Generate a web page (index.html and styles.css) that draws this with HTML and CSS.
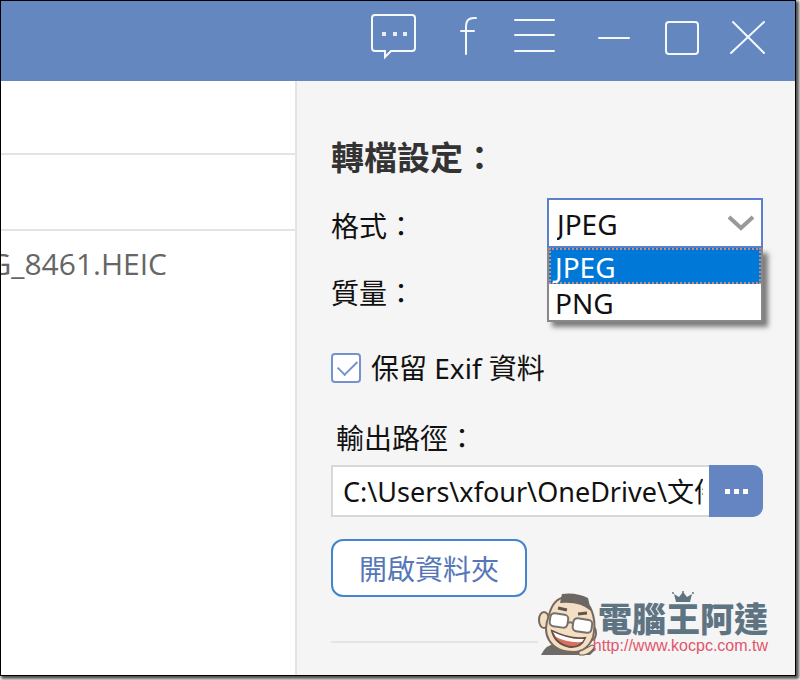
FILE: index.html
```html
<!DOCTYPE html>
<html lang="zh-Hant">
<head>
  <meta charset="UTF-8">
  <meta name="viewport" content="width=device-width, initial-scale=1.0">
  <title>轉檔設定</title>
  <link rel="stylesheet" href="styles.css">
</head>
<body>
  <div class="window">
    <header class="titlebar">
      <div class="tools">
        <button type="button" aria-label="Feedback">
          <svg width="46" height="46" viewBox="0 0 46 46">
            <path d="M4 2H41Q44 2 44 5V35Q44 38 41 38H20L14 44V38H4Q1 38 1 35V5Q1 2 4 2Z"/>
            <path class="solid" d="M11 19h4v4h-4zM22 19h4v4h-4zM32 19h4v4h-4z"/>
          </svg>
        </button>
        <button type="button" aria-label="Facebook">
          <svg width="20" height="46" viewBox="0 0 20 46">
            <path d="M21 5H19Q11 5 11 13V41M6 18H19"/>
          </svg>
        </button>
        <button type="button" aria-label="Menu">
          <svg width="42" height="46" viewBox="0 0 42 46">
            <path d="M2 7H41M2 22H41M2 38H41"/>
          </svg>
        </button>
      </div>
      <div class="controls">
        <button type="button" aria-label="Minimize">
          <svg width="34" height="46" viewBox="0 0 34 46">
            <path d="M2 25H32"/>
          </svg>
        </button>
        <button type="button" aria-label="Maximize">
          <svg width="36" height="46" viewBox="0 0 36 46">
            <rect x="3" y="9" width="32" height="32" rx="3"/>
          </svg>
        </button>
        <button type="button" aria-label="Close">
          <svg width="34" height="46" viewBox="0 0 34 46">
            <path d="M2 9L33 40M33 9L0 40"/>
          </svg>
        </button>
      </div>
    </header>

    <div class="content">
      <main class="files">
        <div class="row"></div>
        <div class="row"></div>
        <div class="file"><span>IMG_8461.HEIC</span></div>
      </main>

      <aside class="settings">
        <h2>轉檔設定：</h2>

        <div class="field format">
          <label for="format">格式：</label>
          <div class="dropdown">
            <select id="format">
              <option>JPEG</option>
              <option>PNG</option>
            </select>
            <svg class="arrow" width="28" height="18" viewBox="0 0 28 18">
              <path d="M2 3L14 14L26 3"/>
            </svg>
            <ul class="options">
              <li class="selected">JPEG</li>
              <li>PNG</li>
            </ul>
          </div>
        </div>

        <div class="field quality">質量：</div>

        <div class="field exif">
          <input type="checkbox" id="exif" checked>
          <label for="exif">保留 Exif 資料</label>
        </div>

        <label class="path-label" for="path">輸出路徑：</label>
        <div class="path">
          <input type="text" id="path" value="C:\Users\xfour\OneDrive\文件">
          <button type="button" aria-label="Browse"><i></i><i></i><i></i></button>
        </div>

        <button type="button" class="open">開啟資料夾</button>

        <hr>
      </aside>

      <div class="watermark">
        <svg class="face" width="60" height="64" viewBox="0 0 60 64">
          <path d="M3 63Q8 52 18 52L44 57Q52 58 55 53L58 57L52 63Z" fill="#6c6b6a"/>
          <path d="M41 59Q48 57 54 53L57 54Q53 61 46 63H41Z" fill="#f4dfc4" stroke="#6a5a4a"/>
          <ellipse cx="6" cy="28" rx="5" ry="8" fill="#f4dfc4" stroke="#77695b" stroke-width="2"/>
          <ellipse cx="54" cy="41" rx="4" ry="7" fill="#f4dfc4" stroke="#77695b" stroke-width="2"/>
          <path d="M11 23Q15 7 27 5Q43 2 52 15Q59 29 55 45Q50 59 36 60Q18 60 11 48Q5 38 11 23Z" fill="#f4dfc4" stroke="#77695b" stroke-width="2"/>
          <path d="M22 11L24 2Q38 0 50 6L53 19Q42 9 22 11Z" fill="#6c6763"/>
          <path d="M20 16L29 18M40 22L49 21" stroke="#5c5550" stroke-width="3"/>
          <rect x="12" y="22" width="18" height="13" rx="4" fill="#fff" stroke="#77716c" stroke-width="2" transform="rotate(8 21 28)"/>
          <rect x="35" y="27" width="19" height="13" rx="4" fill="#fff" stroke="#77716c" stroke-width="2" transform="rotate(8 44 33)"/>
          <path d="M30 31Q33 29 35 32" fill="none" stroke="#77716c" stroke-width="2"/>
          <path d="M14 39Q32 48 47 46Q43 56 32 55Q17 52 14 39Z" fill="#d9705f" stroke="#695044" stroke-width="2"/>
          <path d="M15 40Q32 48 46 47L44 50Q29 51 18 45Z" fill="#fff"/>
        </svg>
        <div class="brand">
          <svg class="crown" width="24" height="12" viewBox="0 0 24 12">
            <path d="M3 3L8 6L12 1L16 6L21 3L19 11H5Z"/>
            <circle cx="2" cy="2" r="1"/>
            <circle cx="12" cy="1" r="1"/>
            <circle cx="22" cy="2" r="1"/>
          </svg>
          <strong>電腦王阿達</strong>
          <a href="http://www.kocpc.com.tw">http://www.kocpc.com.tw</a>
        </div>
      </div>
    </div>
  </div>
</body>
</html>
```

FILE: styles.css
```css
* {
  box-sizing: border-box;
}
body {
  margin: 0;
  padding: 0 4px 4px 0;
  background: #fff;
  color: #111;
  font-family: "Noto Sans", "Noto Sans CJK TC", sans-serif;
  font-size: 28px;
  line-height: 40px;
}
button, input, select {
  font: inherit;
  color: inherit;
  margin: 0;
  padding: 0;
}
.window {
  display: flex;
  flex-direction: column;
  min-height: calc(100vh - 4px);
  border: 1px solid #000;
  box-shadow: 2px 2px 3px 1px rgba(0,0,0,0.7);
}

/* title bar */
.titlebar {
  display: flex;
  justify-content: flex-end;
  gap: 42px;
  height: 80px;
  padding: 12px 30px 0 0;
  background: #6587c0;
}
.tools, .controls {
  display: flex;
  align-items: flex-start;
}
.tools {
  gap: 38px;
}
.controls {
  gap: 32px;
}
.titlebar button {
  display: flex;
  border: none;
  background: none;
}
.titlebar svg {
  overflow: visible;
  fill: none;
  stroke: #f4f9ff;
  stroke-width: 2;
  stroke-linecap: round;
}
.titlebar .solid {
  fill: #e6effb;
  stroke: none;
}

/* file list */
.content {
  position: relative;
  display: flex;
  flex: 1;
}
.files {
  flex: 1;
  min-width: 0;
  background: #fff;
  border-right: 2px solid #e4e4e4;
}
.row {
  height: 76px;
  border-bottom: 2px solid #e4e4e4;
}
.row:first-child {
  height: 74px;
}
.file {
  display: flex;
  justify-content: flex-end;
  padding: 13px 128px 0 0;
  overflow: hidden;
  color: #666;
  font-family: "Open Sans", sans-serif;
  font-size: 30px;
}

/* settings panel */
.settings {
  flex: 0 0 498px;
  min-width: 0;
  padding: 57px 32px 32px 34px;
  background: #f5f5f5;
}
h2 {
  margin: 0 0 20px;
  font-size: 33px;
  font-weight: bold;
  line-height: 40px;
  color: #333;
}
.field {
  display: flex;
  align-items: center;
}
.format {
  justify-content: space-between;
  margin-bottom: 25px;
}
.format label {
  padding-top: 6px;
}
.dropdown {
  position: relative;
  width: 216px;
}
select {
  display: block;
  width: 100%;
  height: 50px;
  padding: 2px 8px 0;
  appearance: none;
  background: #fff;
  border: 2px solid #5b7fcb;
  border-radius: 0;
}
.arrow {
  position: absolute;
  top: 16px;
  right: 8px;
  fill: none;
  stroke: #999;
  stroke-width: 4;
  pointer-events: none;
}
.options {
  position: absolute;
  top: 100%;
  left: 0;
  width: 100%;
  margin: 0;
  padding: 0;
  list-style: none;
  background: #fff;
  border: 2px solid #888;
  border-top: none;
  box-shadow: 5px 5px 5px rgba(0,0,0,0.5);
}
.options li {
  height: 36px;
  padding: 0 6px;
  line-height: 38px;
}
.options .selected {
  padding: 0 4px;
  line-height: 34px;
  background: #0078d7;
  border: 2px dotted #c98a80;
  color: #fff;
}
.quality {
  margin-bottom: 35px;
}
.exif {
  gap: 10px;
  margin-bottom: 30px;
}
.exif input {
  position: relative;
  width: 30px;
  height: 30px;
  appearance: none;
  background: #fff;
  border: 2px solid #7493cc;
  border-radius: 4px;
}
.exif input:checked::before {
  content: "";
  position: absolute;
  top: 5px;
  left: 5px;
  width: 17px;
  height: 9px;
  border: solid #7493cc;
  border-width: 0 0 2px 2px;
  transform: rotate(-45deg);
}
.path-label {
  display: block;
  margin-bottom: 7px;
  padding-left: 5px;
}
.path {
  display: flex;
  height: 52px;
  margin-bottom: 22px;
}
.path input {
  flex: 1;
  min-width: 0;
  padding: 2px 6px 0 10px;
  font-size: 27px;
  background: #fff;
  border: 2px solid #d8d8d8;
  border-right: none;
  border-radius: 0;
}
.path button {
  display: flex;
  justify-content: center;
  align-items: center;
  gap: 4px;
  width: 54px;
  background: #6485c1;
  border: none;
  border-radius: 0 10px 10px 0;
}
.path i {
  width: 5px;
  height: 5px;
  background: #fff;
}
.open {
  display: block;
  width: 196px;
  height: 58px;
  padding-top: 2px;
  background: #fff;
  border: 2px solid #4285cc;
  border-radius: 12px;
  color: #5577b8;
}
hr {
  margin: 44px 0 0;
  border: none;
  border-top: 2px solid #e4e4e4;
}

/* site mark */
.watermark {
  position: absolute;
  right: 27px;
  bottom: 19px;
  display: flex;
  align-items: flex-end;
  background: #f5f5f5;
}
.face {
  margin-right: -5px;
}
.brand {
  position: relative;
  text-align: right;
}
.crown {
  position: absolute;
  top: -11px;
  left: 78px;
  fill: #5f7482;
}
.brand strong {
  display: block;
  font-size: 34px;
  font-weight: 900;
  line-height: 34px;
  color: #5f7482;
}
.brand a {
  display: block;
  font-family: "Liberation Sans", sans-serif;
  font-size: 16px;
  line-height: 20px;
  color: #e2566a;
  text-decoration: none;
}
```
